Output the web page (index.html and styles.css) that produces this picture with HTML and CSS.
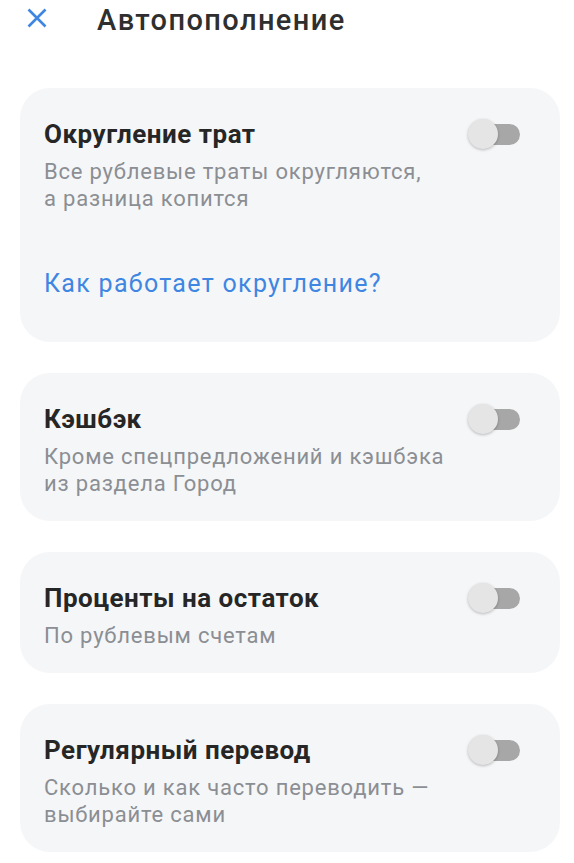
FILE: index.html
```html
<!DOCTYPE html>
<html lang="ru">
<head>
<meta charset="utf-8">
<title>Автопополнение</title>
<link rel="stylesheet" href="styles.css">
</head>
<body>
<header class="header">
  <button class="close" aria-label="Закрыть">
    <svg width="20" height="20" viewBox="0 0 20 20" fill="none" stroke="#3f86e2" stroke-width="2.6" stroke-linecap="butt">
      <path d="M1.5 1.5 L18.5 18.5 M18.5 1.5 L1.5 18.5"/>
    </svg>
  </button>
  <h1 class="title">Автопополнение</h1>
</header>

<main class="cards">
  <section class="card">
    <div class="row">
      <div class="text">
        <h2 class="card-title">Округление трат</h2>
        <p class="card-sub">Все рублевые траты округляются,<br>а разница копится</p>
      </div>
      <span class="switch"><span class="thumb"></span></span>
    </div>
    <a class="link" href="#">Как работает округление?</a>
  </section>

  <section class="card">
    <div class="row">
      <div class="text">
        <h2 class="card-title">Кэшбэк</h2>
        <p class="card-sub">Кроме спецпредложений и кэшбэка<br>из раздела Город</p>
      </div>
      <span class="switch"><span class="thumb"></span></span>
    </div>
  </section>

  <section class="card">
    <div class="row">
      <div class="text">
        <h2 class="card-title">Проценты на остаток</h2>
        <p class="card-sub">По рублевым счетам</p>
      </div>
      <span class="switch"><span class="thumb"></span></span>
    </div>
  </section>

  <section class="card">
    <div class="row">
      <div class="text">
        <h2 class="card-title">Регулярный перевод</h2>
        <p class="card-sub">Сколько и как часто переводить —<br>выбирайте сами</p>
      </div>
      <span class="switch"><span class="thumb"></span></span>
    </div>
  </section>
</main>
</body>
</html>
```
FILE: styles.css
```css
* { box-sizing: border-box; }

html, body {
  margin: 0;
  padding: 0;
  background: #ffffff;
  font-family: Roboto, "Noto Sans", "Liberation Sans", sans-serif;
}

.header {
  display: flex;
  align-items: center;
  height: 38px;
  padding: 2px 0 0 27px;
}

.close {
  display: flex;
  width: 20px;
  height: 20px;
  padding: 0;
  margin: 0 0 4px 0;
  border: none;
  background: none;
}

.title {
  margin: 0 0 0 50px;
  font-size: 29px;
  line-height: 36px;
  font-weight: 500;
  color: #2f2f2f;
  letter-spacing: 1.4px;
}

.cards {
  display: flex;
  flex-direction: column;
  gap: 31px;
  margin: 50px 14px 0 20px;
}

.card {
  background: #f5f6f8;
  border-radius: 30px;
  padding: 30px 24px 24px 24px;
}

.row {
  display: flex;
  align-items: flex-start;
  justify-content: space-between;
}

.card-title {
  margin: 0;
  font-size: 26px;
  line-height: 32px;
  font-weight: 700;
  color: #262626;
  letter-spacing: 0.5px;
}

.card-sub {
  margin: 8px 0 0 0;
  font-size: 22px;
  line-height: 27px;
  color: #8b8e93;
  letter-spacing: 0.8px;
}

.switch {
  position: relative;
  flex: none;
  width: 52px;
  height: 32px;
  margin-right: 16px;
}

.switch::before {
  content: "";
  position: absolute;
  left: 2px;
  top: 6px;
  width: 50px;
  height: 21px;
  border-radius: 11px;
  background: #a7a7a7;
}

.thumb {
  position: absolute;
  left: 0;
  top: 1px;
  width: 30px;
  height: 30px;
  border-radius: 50%;
  background: #e5e5e5;
  box-shadow: 0 1px 3px rgba(0, 0, 0, 0.25);
}

.link {
  display: block;
  margin: 56px 0 18px 0;
  font-size: 25px;
  line-height: 32px;
  color: #3f86e2;
  text-decoration: none;
  letter-spacing: 1.3px;
}
```
